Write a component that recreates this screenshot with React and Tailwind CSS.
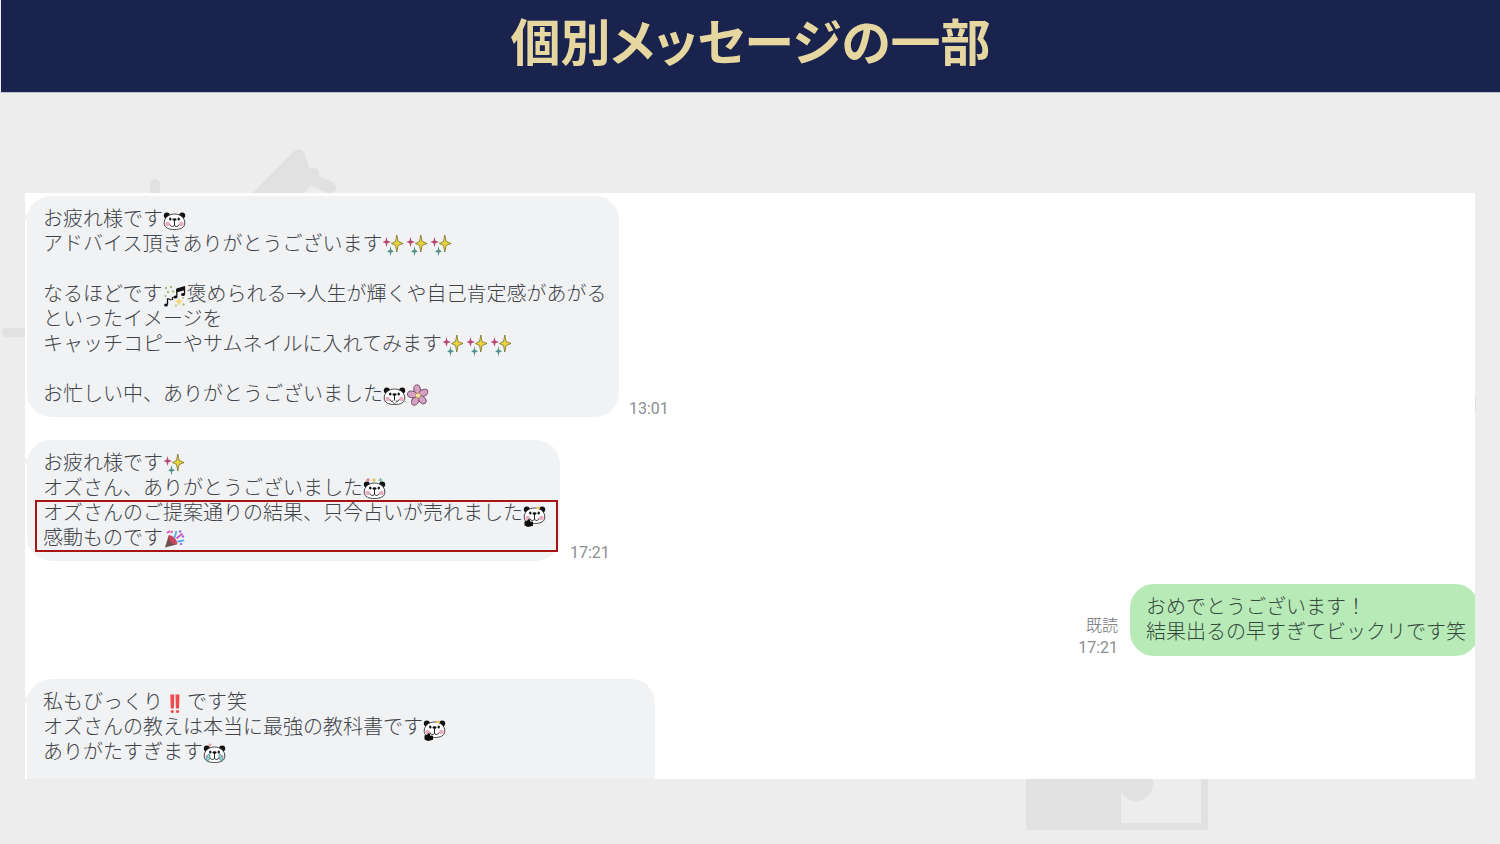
import React from 'react';

const Sparkle = () => (
  <svg className="inline-block w-6 h-6 align-middle" viewBox="0 0 24 24">
    <path fill="#b8476f" d="M4.500 3l1 3.800 3.500 1.200-3.500 1.200-1 3.800-1-3.800L.5 8l3-1.200z" />
    <path fill="#4b8f86" d="M8.500 12l.8 4 2.700 1.200-2.700 1.200-.8 4-.8-4L5 17.200l2.700-1.200z" />
    <path fill="#e8d43c" stroke="#6f6420" strokeWidth=".7" d="M14.800 1l1.300 6.500 5 2-5 2-1.300 6.500-1.300-6.500-4-2 4-2z" />
  </svg>
);

const Panda = ({ mood }) => (
  <svg className="inline-block w-6 h-6 align-middle" viewBox="0 0 24 24">
    <ellipse cx="3.800" cy="6.500" rx="3" ry="3" fill="#111" />
    <ellipse cx="19.200" cy="6.500" rx="3" ry="3" fill="#111" />
    <path fill="#fff" stroke="#333" strokeWidth=".9" d="M11.500 5C6 5 1.200 8.500 1.200 14c0 5 4.800 6.500 10.300 6.500S21.800 19 21.800 14C21.800 8.500 17 5 11.500 5z" />
    <circle cx="4.600" cy="15" r="2.300" fill="#eda9c2" />
    <circle cx="18.400" cy="15" r="2.300" fill="#eda9c2" />
    <ellipse cx="7.300" cy="10" rx="1.200" ry="1.600" fill="#111" />
    <ellipse cx="15.700" cy="10" rx="1.200" ry="1.600" fill="#111" />
    <ellipse cx="11.500" cy="10.500" rx="2" ry="1.300" fill="#111" />
    <path fill="none" stroke="#222" strokeWidth="1" d="M11.500 11v5M7 15.500c.5 2.500 4 2.500 4.500.5.500 2 4 2 4.500-.5" />
    {mood === 'laugh' && <path fill="#fff" stroke="#555" strokeWidth=".8" d="M9.500 16.500c0 4 4 4 4 0" />}
    {mood === 'party' && (
      <g strokeWidth="1.100" fill="none">
        <path stroke="#e36a72" d="M5 0v4M3 2h4" />
        <path stroke="#e5b94d" d="M11 0v4M9 2h4" />
        <path stroke="#55b9a0" d="M17.500 0v4M15.500 2h4" />
      </g>
    )}
    {mood === 'thumb' && (
      <g>
        <path fill="#e9c75b" d="M13 3l1.500 1.500L16.500 3 17 6h-3.500z" />
        <path fill="#0b0b0b" d="M1.500 18.500c2-1 3.500-1 4-2.500l1.800.7-.3 1.800 3 .3v4L5 24l-3.500-1.500z" />
      </g>
    )}
    {mood === 'cry' && (
      <g>
        <path fill="#8ed3cf" stroke="#40827f" strokeWidth=".7" d="M6.500 11.500c-2 1.500-4 4-2.800 7 2.500 1.200 4-3 2.800-7zM16.500 11.500c2 1.500 4 4 2.800 7-2.500 1.200-4-3-2.800-7z" />
        <path stroke="#e08a87" d="M7 1.500v3M5.500 3h3" />
      </g>
    )}
  </svg>
);

const Music = () => (
  <svg className="inline-block w-6 h-6 align-middle" viewBox="0 0 24 24">
    <g fill="#aebc75">
      <circle cx="3" cy="4" r="1.200" />
      <circle cx="8" cy="3" r="1.200" />
      <circle cx="5" cy="8" r="1.200" />
      <circle cx="10" cy="7.500" r="1.200" />
      <circle cx="2.500" cy="12" r="1" />
      <circle cx="20" cy="14" r="1" />
      <circle cx="13" cy="21.500" r="1" />
      <circle cx="20.500" cy="20.500" r="1.200" />
    </g>
    <path fill="#f0db7b" d="M16 13l1.300 3.200 3.200 1.300-3.200 1.300L16 22l-1.300-3.200-3.200-1.300 3.200-1.300z" />
    <path fill="#111" d="M13.500 4.500L22 2v4l-8.500 2.500z" />
    <path fill="none" stroke="#111" strokeWidth="1.300" d="M13.800 5v8M21.500 3v7.500M4.500 14.500v6M4.500 14.500l4 1.500M9.500 13v3" />
    <g fill="#111">
      <ellipse cx="12.300" cy="13" rx="2" ry="1.600" />
      <ellipse cx="20" cy="10.500" rx="2" ry="1.600" />
      <ellipse cx="3" cy="21" rx="1.900" ry="1.500" />
    </g>
  </svg>
);

const Flower = () => (
  <svg className="inline-block w-6 h-6 align-middle" viewBox="0 0 24 24">
    <g fill="#d9a0c3" stroke="#6d4a60" strokeWidth=".9">
      <ellipse cx="11" cy="5.500" rx="3.300" ry="4.700" transform="rotate(-8 11 11.500)" />
      <ellipse cx="11" cy="5.500" rx="3.300" ry="4.700" transform="rotate(64 11 11.500)" />
      <ellipse cx="11" cy="5.500" rx="3.300" ry="4.700" transform="rotate(136 11 11.500)" />
      <ellipse cx="11" cy="5.500" rx="3.300" ry="4.700" transform="rotate(208 11 11.500)" />
      <ellipse cx="11" cy="5.500" rx="3.300" ry="4.700" transform="rotate(280 11 11.500)" />
    </g>
    <circle cx="11" cy="11.500" r="2.600" fill="#f6e4a0" stroke="#8b6f50" strokeWidth=".6" />
  </svg>
);

const Popper = () => (
  <svg className="inline-block w-6 h-6 align-middle" viewBox="0 0 24 24">
    <path fill="#70514d" d="M2 19.500L5.500 8l8 8.500z" />
    <path fill="#c8455d" d="M5.500 7.500c3-2 10 5 8.500 9-3 1-10-5-8.500-9z" />
    <path fill="none" stroke="#5aaee6" strokeWidth="2" d="M11.500 10c0-3 2-3 1.500-7M14.500 14c2-2 4 0 6.500-2" />
    <path fill="none" stroke="#d45bc3" strokeWidth="2" d="M13.500 10.500l6-5M4 5l3-2M8 5l1.500-2" />
    <g fill="#9a6be0">
      <circle cx="17" cy="3.500" r="1.200" />
      <circle cx="20" cy="8.500" r="1.200" />
      <circle cx="18" cy="16" r="1.200" />
    </g>
  </svg>
);

const DoubleBang = () => (
  <svg className="inline-block w-6 h-6 align-middle" viewBox="0 0 24 24">
    <g fill="#ef4b50">
      <path d="M7.300 2.500h4l-.4 14H7.800zM12.500 2.500h4l-.5 14h-3.100z" />
      <circle cx="9.300" cy="19.500" r="1.600" />
      <circle cx="14.500" cy="19.500" r="1.600" />
    </g>
  </svg>
);

const Time = ({ children }) => (
  <time className="font-['Roboto',sans-serif] text-[16px] leading-4 font-normal text-[#8b8e92]">{children}</time>
);

const Incoming = ({ time, className, children }) => (
  <div className="flex items-end gap-[10px]">
    <div className={`relative rounded-3xl bg-[#f0f2f4] pl-4 pt-[11px] pb-[10px] ${className}`}>
      <svg className="absolute -left-[2px] top-4 w-2 h-5" viewBox="0 0 8 20" fill="#f0f2f4">
        <path d="M0 2q3 1 5-2l3 4v16L0 7z" />
      </svg>
      {children}
    </div>
    {time && <Time>{time}</Time>}
  </div>
);

const Line = ({ children }) => <p className="h-[25px] whitespace-nowrap">{children}</p>;

function Backdrop() {
  return (
    <>
      <svg className="absolute left-0 top-[145px] w-[360px] h-[200px]" viewBox="0 0 360 200" fill="#e1e1e1">
        <rect x="150" y="34" width="10" height="30" rx="5" />
        <rect x="2" y="183" width="60" height="9" rx="4.500" />
        <path d="M240 61L293 7q6-5 11 0l6 17q5-3 9 2v5l15 7q5 5-1 10h-6l-17-8-8 12-5 10z" />
      </svg>
      <svg className="absolute left-[1026px] top-[770px] w-[183px] h-[60px]" viewBox="0 0 183 60" fill="#e1e1e1">
        <path d="M0 0h95v60H2q-2 0-2-2z" />
        <circle cx="110" cy="14" r="17" />
        <path d="M175 0h7v58q0 2-2 2H90v-7h85z" />
      </svg>
      <svg className="absolute right-0 top-[395px] w-[26px] h-[18px]" viewBox="0 0 26 18" fill="#e1e1e1">
        <path d="M0 2h2v14H0z" />
      </svg>
    </>
  );
}

function App() {
  return (
    <div className="relative min-h-screen overflow-hidden bg-[#ededed] font-['Roboto','Noto_Sans_CJK_JP',sans-serif]">
      <Backdrop />

      <header className="relative flex justify-center h-[93px] pt-2 bg-[#19234e] border-b border-l border-b-[#b8bfd0] border-l-[#ededed]">
        <h1 className="text-[50px] leading-[72px] font-bold text-[#e6d69f] whitespace-nowrap [font-feature-settings:'palt']">
          個別メッセージの一部
        </h1>
      </header>

      <main className="relative mt-[100px] mx-[25px] h-[586px] overflow-hidden bg-white pt-[3px] pl-[2px] text-[20px] leading-[25px] font-light text-[#3f4348]">
        <Incoming time="13:01" className="w-[592px]">
          <Line>お疲れ様です<Panda /></Line>
          <Line>アドバイス頂きありがとうございます<Sparkle /><Sparkle /><Sparkle /></Line>
          <Line />
          <Line>なるほどです<Music />褒められる→人生が輝くや自己肯定感があがる</Line>
          <Line>といったイメージを</Line>
          <Line>キャッチコピーやサムネイルに入れてみます<Sparkle /><Sparkle /><Sparkle /></Line>
          <Line />
          <Line>お忙しい中、ありがとうございました<Panda mood="laugh" /><Flower /></Line>
        </Incoming>

        <div className="mt-[23px]">
          <Incoming time="17:21" className="w-[533px]">
            <Line>お疲れ様です<Sparkle /></Line>
            <Line>オズさん、ありがとうございました<Panda mood="party" /></Line>
            <Line>オズさんのご提案通りの結果、只今占いが売れました<Panda mood="thumb" /></Line>
            <Line>感動ものです<Popper /></Line>
            <div className="absolute left-2 right-[2px] top-[60px] h-[52px] border-2 border-[#a81414]" />
          </Incoming>
        </div>

        <div className="mt-[23px] -mr-1 flex items-end justify-end gap-3">
          <div className="flex flex-col items-end gap-1">
            <span className="text-[16px] leading-5 text-[#6f7276]">既読</span>
            <Time>17:21</Time>
          </div>
          <div className="w-[349px] rounded-3xl bg-[#b8eab8] pl-4 py-[11px] text-[#34483c]">
            <Line>おめでとうございます！</Line>
            <Line>結果出るの早すぎてビックリです笑</Line>
          </div>
        </div>

        <div className="mt-[23px]">
          <Incoming className="w-[628px] h-[140px]">
            <Line>私もびっくり<DoubleBang />です笑</Line>
            <Line>オズさんの教えは本当に最強の教科書です<Panda mood="thumb" /></Line>
            <Line>ありがたすぎます<Panda mood="cry" /></Line>
          </Incoming>
        </div>
      </main>
    </div>
  );
}

export default App;
